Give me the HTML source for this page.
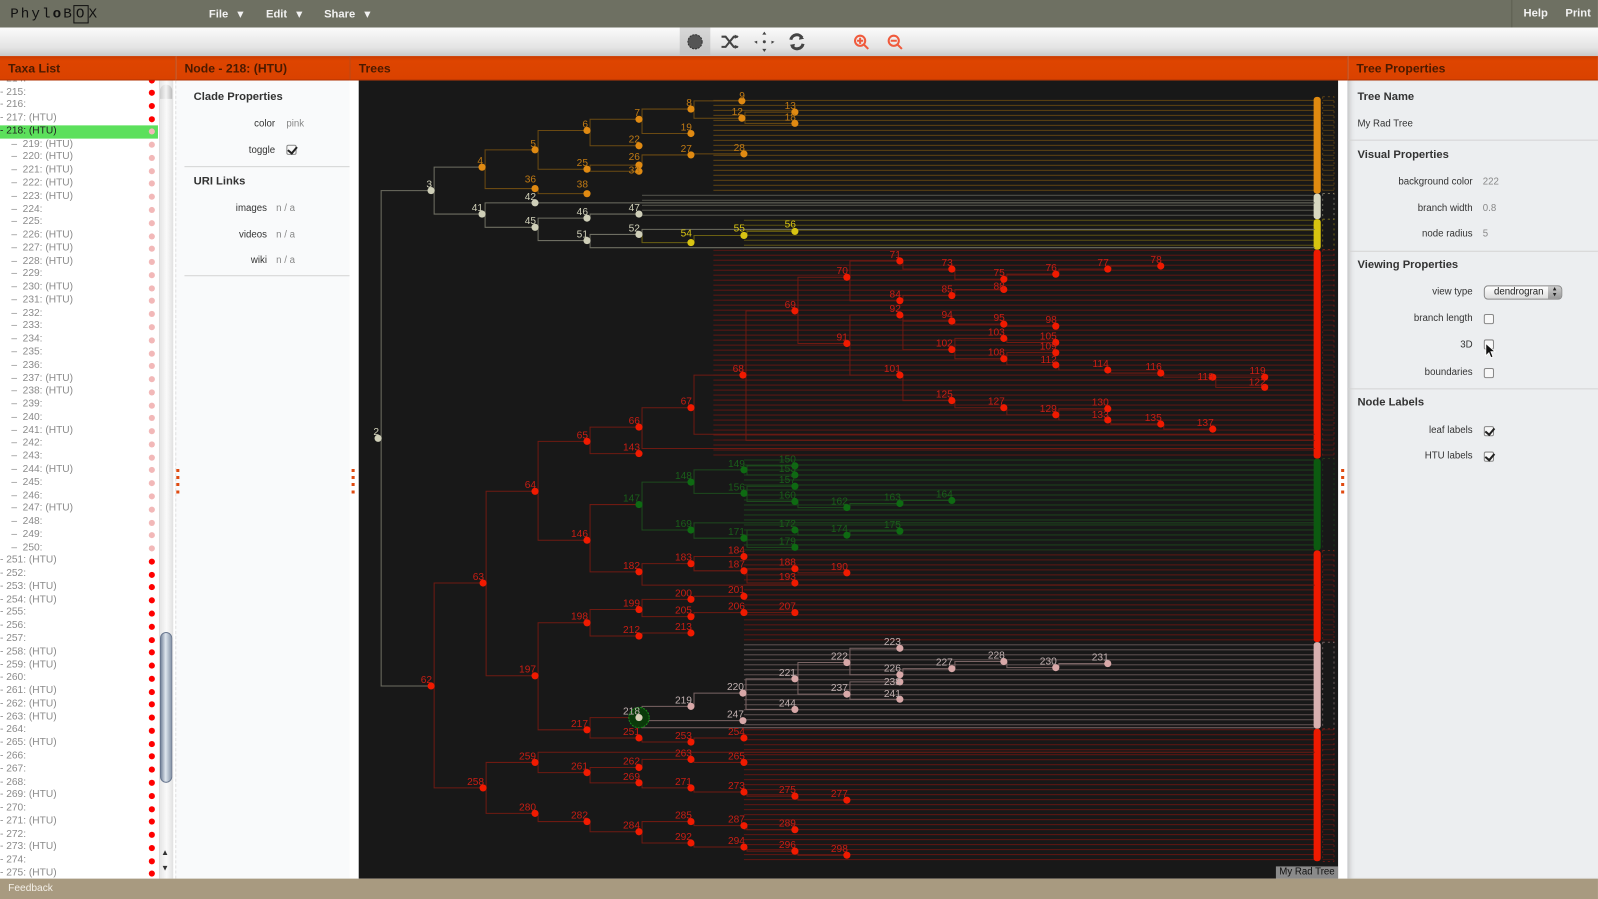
<!DOCTYPE html>
<html><head><meta charset="utf-8"><style>
*{margin:0;padding:0;box-sizing:border-box}
html,body{width:1598px;height:899px;overflow:hidden;background:#eceef0;font-family:"Liberation Sans",sans-serif}
#w{position:absolute;left:0;top:0;width:1568px;height:882px;transform:scale(1.0191,1.0193);transform-origin:0 0;background:#eceef0}
.a{position:absolute}
#top{left:0;top:0;width:1568px;height:27px;background:#6e7062}
#tool{left:0;top:27px;width:1568px;height:28px;background:linear-gradient(#fbfbfb,#e4e4e4 70%,#c8c8c8)}
.menu{color:#f2f2f2;font-weight:bold;font-size:11px;top:7px}
.hdr{top:55px;height:24px;background:linear-gradient(#c83a00,#de4500 20%,#da4200);border-bottom:1px solid #b03000}
.hdr span{position:absolute;top:5px;left:8px;font-size:12px;font-weight:bold;color:#4a1a00}
#taxa{left:0;top:79px;width:172px;height:783px;background:#fff;overflow:hidden}
.row{position:absolute;left:0;height:12.77px;width:155px;font-size:10px;line-height:12.77px;color:#8a8a8a;white-space:nowrap}
.row i{position:absolute;left:146px;top:3.5px;width:6px;height:6px;border-radius:50%;background:#f00;font-style:normal}
.row.p i{background:#f2b8b8}
.row.sel{background:#5ce05c;color:#222}
#node{left:172px;top:79px;width:171px;height:783px;background:#f9fafb;border-left:1px dashed #e2e2e2}
.lb{position:absolute;font-size:9.5px;color:#333;text-align:right;width:120px}
.vl{position:absolute;font-size:9.5px;color:#888}
.bh{position:absolute;font-size:11px;font-weight:bold;color:#333}
.sep{position:absolute;height:1px;background:#d4d4d4}
.cb{position:absolute;width:10px;height:10px;border:1px solid #888;border-radius:2px;background:#f8f8f8}
.cb.c::after{content:"";position:absolute;left:2px;top:-1px;width:4px;height:7px;border:solid #222;border-width:0 2px 2px 0;transform:rotate(40deg)}
#trees{left:343px;top:79px;width:979px;height:783px;background:#fff}
#cv{left:352px;top:79px;width:961px;height:783px;background:#181818;overflow:hidden}
#rp{left:1322px;top:79px;width:246px;height:783px;background:#eceef0;box-shadow:inset 6px 0 6px -4px #bbb}
#bot{left:0;top:862px;width:1568px;height:20px;background:#a89a80}
.band{position:absolute}
</style></head><body><div id="w">
<div class="a" id="top">
 <div class="a" style="left:10px;top:6px;font-size:14px;letter-spacing:2px;color:#111;font-family:'Liberation Mono',monospace">Phyl<b>o</b>B<span style="border:1px solid #111;padding:0 1px">O</span>X</div>
 <div class="a menu" style="left:205px">File&nbsp;&nbsp;&nbsp;▾</div>
 <div class="a menu" style="left:261px">Edit&nbsp;&nbsp;&nbsp;▾</div>
 <div class="a menu" style="left:318px">Share&nbsp;&nbsp;&nbsp;▾</div>
 <div class="a" style="left:1483px;top:0;width:1px;height:27px;background:#5c5e52"></div>
 <div class="a menu" style="left:1495px">Help</div>
 <div class="a menu" style="left:1536px">Print</div>
</div>
<div class="a" id="tool">
 <div class="a" style="left:667px;top:0;width:30px;height:27px;background:linear-gradient(#d8d8d8,#c4c4c4)"></div>
 <svg class="a" style="left:660px;top:0" width="240" height="27" viewBox="0 0 240 27">
  <circle cx="22" cy="14" r="7" fill="#555" stroke="#333" stroke-dasharray="2 1"/>
  <g stroke="#444" stroke-width="2" fill="none"><path d="M48 9h4l8 10h4M48 19h4l8-10h4"/></g>
  <path d="M61 7l4 2-4 2zM61 17l4 2-4 2z" fill="#444"/>
  <g fill="#444"><path d="M88 7l2-3 2 3zM88 21l2 3 2-3zM83 13l-3 1 3 2zM97 13l3 1-3 2z"/><circle cx="90" cy="14" r="1.5"/></g>
  <g stroke="#444" stroke-width="3" fill="none"><path d="M116 12a6 6 0 0 1 11-2M128 16a6 6 0 0 1-11 2"/></g>
  <path d="M125 7l4 4-5 1zM119 21l-4-4 5-1z" fill="#444"/>
  <g stroke="#f05a3c" stroke-width="2" fill="none"><circle cx="184" cy="13" r="5"/><path d="M188 17l4 4M181 13h6M184 10v6"/><circle cx="217" cy="13" r="5"/><path d="M221 17l4 4M214 13h6"/></g>
 </svg>
</div>
<div class="a hdr" style="left:0;width:172px"><span>Taxa List</span></div>
<div class="a hdr" style="left:172px;width:171px;border-left:1px solid #b83800"><span>Node - 218: (HTU)</span></div>
<div class="a hdr" style="left:343px;width:979px;border-left:1px solid #b83800"><span>Trees</span></div>
<div class="a hdr" style="left:1322px;width:246px;border-left:1px solid #b83800"><span>Tree Properties</span></div>

<div class="a" id="taxa">
<div class="row" style="top:-7px">- 214:<i></i></div>
<div class="row" style="top:5.5px">- 215:<i></i></div>
<div class="row" style="top:18.3px">- 216:<i></i></div>
<div class="row" style="top:31.1px">- 217: (HTU)<i></i></div>
<div class="row sel p" style="top:43.9px">- 218: (HTU)<i></i></div>
<div class="row p" style="top:56.6px">&nbsp;&nbsp;&nbsp;&nbsp;–&nbsp; 219: (HTU)<i></i></div>
<div class="row p" style="top:69.4px">&nbsp;&nbsp;&nbsp;&nbsp;–&nbsp; 220: (HTU)<i></i></div>
<div class="row p" style="top:82.2px">&nbsp;&nbsp;&nbsp;&nbsp;–&nbsp; 221: (HTU)<i></i></div>
<div class="row p" style="top:94.9px">&nbsp;&nbsp;&nbsp;&nbsp;–&nbsp; 222: (HTU)<i></i></div>
<div class="row p" style="top:107.7px">&nbsp;&nbsp;&nbsp;&nbsp;–&nbsp; 223: (HTU)<i></i></div>
<div class="row p" style="top:120.5px">&nbsp;&nbsp;&nbsp;&nbsp;–&nbsp; 224:<i></i></div>
<div class="row p" style="top:133.3px">&nbsp;&nbsp;&nbsp;&nbsp;–&nbsp; 225:<i></i></div>
<div class="row p" style="top:146px">&nbsp;&nbsp;&nbsp;&nbsp;–&nbsp; 226: (HTU)<i></i></div>
<div class="row p" style="top:158.8px">&nbsp;&nbsp;&nbsp;&nbsp;–&nbsp; 227: (HTU)<i></i></div>
<div class="row p" style="top:171.6px">&nbsp;&nbsp;&nbsp;&nbsp;–&nbsp; 228: (HTU)<i></i></div>
<div class="row p" style="top:184.4px">&nbsp;&nbsp;&nbsp;&nbsp;–&nbsp; 229:<i></i></div>
<div class="row p" style="top:197.1px">&nbsp;&nbsp;&nbsp;&nbsp;–&nbsp; 230: (HTU)<i></i></div>
<div class="row p" style="top:209.9px">&nbsp;&nbsp;&nbsp;&nbsp;–&nbsp; 231: (HTU)<i></i></div>
<div class="row p" style="top:222.7px">&nbsp;&nbsp;&nbsp;&nbsp;–&nbsp; 232:<i></i></div>
<div class="row p" style="top:235.4px">&nbsp;&nbsp;&nbsp;&nbsp;–&nbsp; 233:<i></i></div>
<div class="row p" style="top:248.2px">&nbsp;&nbsp;&nbsp;&nbsp;–&nbsp; 234:<i></i></div>
<div class="row p" style="top:261px">&nbsp;&nbsp;&nbsp;&nbsp;–&nbsp; 235:<i></i></div>
<div class="row p" style="top:273.8px">&nbsp;&nbsp;&nbsp;&nbsp;–&nbsp; 236:<i></i></div>
<div class="row p" style="top:286.5px">&nbsp;&nbsp;&nbsp;&nbsp;–&nbsp; 237: (HTU)<i></i></div>
<div class="row p" style="top:299.3px">&nbsp;&nbsp;&nbsp;&nbsp;–&nbsp; 238: (HTU)<i></i></div>
<div class="row p" style="top:312.1px">&nbsp;&nbsp;&nbsp;&nbsp;–&nbsp; 239:<i></i></div>
<div class="row p" style="top:324.9px">&nbsp;&nbsp;&nbsp;&nbsp;–&nbsp; 240:<i></i></div>
<div class="row p" style="top:337.6px">&nbsp;&nbsp;&nbsp;&nbsp;–&nbsp; 241: (HTU)<i></i></div>
<div class="row p" style="top:350.4px">&nbsp;&nbsp;&nbsp;&nbsp;–&nbsp; 242:<i></i></div>
<div class="row p" style="top:363.2px">&nbsp;&nbsp;&nbsp;&nbsp;–&nbsp; 243:<i></i></div>
<div class="row p" style="top:375.9px">&nbsp;&nbsp;&nbsp;&nbsp;–&nbsp; 244: (HTU)<i></i></div>
<div class="row p" style="top:388.7px">&nbsp;&nbsp;&nbsp;&nbsp;–&nbsp; 245:<i></i></div>
<div class="row p" style="top:401.5px">&nbsp;&nbsp;&nbsp;&nbsp;–&nbsp; 246:<i></i></div>
<div class="row p" style="top:414.3px">&nbsp;&nbsp;&nbsp;&nbsp;–&nbsp; 247: (HTU)<i></i></div>
<div class="row p" style="top:427px">&nbsp;&nbsp;&nbsp;&nbsp;–&nbsp; 248:<i></i></div>
<div class="row p" style="top:439.8px">&nbsp;&nbsp;&nbsp;&nbsp;–&nbsp; 249:<i></i></div>
<div class="row p" style="top:452.6px">&nbsp;&nbsp;&nbsp;&nbsp;–&nbsp; 250:<i></i></div>
<div class="row" style="top:465.4px">- 251: (HTU)<i></i></div>
<div class="row" style="top:478.1px">- 252:<i></i></div>
<div class="row" style="top:490.9px">- 253: (HTU)<i></i></div>
<div class="row" style="top:503.7px">- 254: (HTU)<i></i></div>
<div class="row" style="top:516.4px">- 255:<i></i></div>
<div class="row" style="top:529.2px">- 256:<i></i></div>
<div class="row" style="top:542px">- 257:<i></i></div>
<div class="row" style="top:554.8px">- 258: (HTU)<i></i></div>
<div class="row" style="top:567.5px">- 259: (HTU)<i></i></div>
<div class="row" style="top:580.3px">- 260:<i></i></div>
<div class="row" style="top:593.1px">- 261: (HTU)<i></i></div>
<div class="row" style="top:605.9px">- 262: (HTU)<i></i></div>
<div class="row" style="top:618.6px">- 263: (HTU)<i></i></div>
<div class="row" style="top:631.4px">- 264:<i></i></div>
<div class="row" style="top:644.2px">- 265: (HTU)<i></i></div>
<div class="row" style="top:656.9px">- 266:<i></i></div>
<div class="row" style="top:669.7px">- 267:<i></i></div>
<div class="row" style="top:682.5px">- 268:<i></i></div>
<div class="row" style="top:695.3px">- 269: (HTU)<i></i></div>
<div class="row" style="top:708px">- 270:<i></i></div>
<div class="row" style="top:720.8px">- 271: (HTU)<i></i></div>
<div class="row" style="top:733.6px">- 272:<i></i></div>
<div class="row" style="top:746.4px">- 273: (HTU)<i></i></div>
<div class="row" style="top:759.1px">- 274:<i></i></div>
<div class="row" style="top:771.9px">- 275: (HTU)<i></i></div>
<div class="a" style="left:156px;top:0;width:14px;height:783px;background:linear-gradient(90deg,#e6e6e6,#fafafa,#e0e0e0);border-left:1px solid #ddd"></div>
<div class="a" style="left:157px;top:4px;width:12px;height:14px;border-radius:6px 6px 0 0;background:linear-gradient(90deg,#ccc,#f4f4f4,#bbb)"></div>
<div class="a" style="left:157px;top:541px;width:12px;height:148px;border-radius:6px;background:linear-gradient(90deg,#7c8aa0,#dfe6ee 45%,#8a98ac);border:1px solid #6a7890"></div>
<div class="a" style="left:158px;top:753px;font-size:8px;color:#333">▲</div>
<div class="a" style="left:158px;top:768px;font-size:8px;color:#333">▼</div>
</div>

<div class="a" id="node">
 <div class="bh" style="left:17px;top:10px">Clade Properties</div>
 <div class="lb" style="left:-23px;top:37px">color</div><div class="vl" style="left:108px;top:37px">pink</div>
 <div class="lb" style="left:-23px;top:63px">toggle</div><div class="cb c" style="left:108px;top:63px"></div>
 <div class="sep" style="left:8px;width:163px;top:84px"></div>
 <div class="bh" style="left:17px;top:93px">URI Links</div>
 <div class="lb" style="left:-31px;top:120px">images</div><div class="vl" style="left:98px;top:120px">n / a</div>
 <div class="lb" style="left:-31px;top:146px">videos</div><div class="vl" style="left:98px;top:146px">n / a</div>
 <div class="lb" style="left:-31px;top:171px">wiki</div><div class="vl" style="left:98px;top:171px">n / a</div>
 <div class="sep" style="left:8px;width:163px;top:191px"></div>
</div>

<div class="a" id="trees"></div>
<div class="a" style="left:173px;top:460px;width:3px;height:25px;background:repeating-linear-gradient(#e04a10 0 3px,transparent 3px 7px)"></div>
<div class="a" style="left:345px;top:460px;width:3px;height:25px;background:repeating-linear-gradient(#e04a10 0 3px,transparent 3px 7px)"></div>
<div class="a" style="left:1316px;top:460px;width:3px;height:25px;background:repeating-linear-gradient(#e04a10 0 3px,transparent 3px 7px)"></div>

<div class="a" id="cv">
<svg width="961" height="783" viewBox="352 79 961 783" style="position:absolute;left:0;top:0">
<defs>
<pattern id="po" width="10" height="4.9" patternUnits="userSpaceOnUse"><rect width="10" height="1" fill="#5e4212"/></pattern>
<pattern id="pg" width="10" height="4.9" patternUnits="userSpaceOnUse"><rect width="10" height="1" fill="#54544c"/></pattern>
<pattern id="py" width="10" height="4.9" patternUnits="userSpaceOnUse"><rect width="10" height="1" fill="#5a5012"/></pattern>
<pattern id="pr" width="10" height="4.9" patternUnits="userSpaceOnUse"><rect width="10" height="1" fill="#5e1612"/></pattern>
<pattern id="pn" width="10" height="4.9" patternUnits="userSpaceOnUse"><rect width="10" height="1" fill="#1a421a"/></pattern>
<pattern id="pp" width="10" height="4.9" patternUnits="userSpaceOnUse"><rect width="10" height="1" fill="#5e5050"/></pattern>
</defs>
<rect x="700" y="95" width="592" height="95" fill="url(#po)"/>
<rect x="630" y="190" width="662" height="25" fill="url(#pg)"/>
<rect x="730" y="215" width="562" height="30" fill="url(#py)"/>
<rect x="700" y="245" width="592" height="205" fill="url(#pr)"/>
<rect x="730" y="450" width="562" height="90" fill="url(#pn)"/>
<rect x="730" y="540" width="562" height="90" fill="url(#pr)"/>
<rect x="730" y="630" width="562" height="85" fill="url(#pp)"/>
<rect x="730" y="715" width="562" height="130" fill="url(#pr)"/>
<rect x="1289" y="95" width="7" height="95" rx="3" fill="#e08a10"/>
<rect x="1289" y="190" width="7" height="25" rx="3" fill="#d8d8c0"/>
<rect x="1289" y="215" width="7" height="30" rx="3" fill="#d8c410"/>
<rect x="1289" y="245" width="7" height="205" rx="3" fill="#ee1a00"/>
<rect x="1289" y="450" width="7" height="90" rx="3" fill="#0c5a10"/>
<rect x="1289" y="540" width="7" height="90" rx="3" fill="#ee1a00"/>
<rect x="1289" y="630" width="7" height="85" rx="3" fill="#d8b0b0"/>
<rect x="1289" y="715" width="7" height="130" rx="3" fill="#ee1a00"/>
<g opacity="0.75">
<rect x="1298" y="95" width="11" height="95" fill="url(#po)" stroke="#b07010" stroke-width="0.6" stroke-dasharray="2 3"/>
<rect x="1298" y="190" width="11" height="25" fill="none" stroke="#c8c8b0" stroke-width="0.6" stroke-dasharray="2 3"/>
<rect x="1298" y="215" width="11" height="30" fill="none" stroke="#c8b010" stroke-width="0.6" stroke-dasharray="2 3"/>
<rect x="1298" y="245" width="11" height="205" fill="url(#pr)" stroke="#c01a10" stroke-width="0.6" stroke-dasharray="2 3"/>
<rect x="1298" y="450" width="11" height="90" fill="none" stroke="#1a5a1a" stroke-width="0.6" stroke-dasharray="2 3"/>
<rect x="1298" y="540" width="11" height="90" fill="url(#pr)" stroke="#c01a10" stroke-width="0.6" stroke-dasharray="2 3"/>
<rect x="1298" y="630" width="11" height="85" fill="none" stroke="#c0a0a0" stroke-width="0.6" stroke-dasharray="2 3"/>
<rect x="1298" y="715" width="11" height="130" fill="url(#pr)" stroke="#c01a10" stroke-width="0.6" stroke-dasharray="2 3"/>
</g>
<g fill="none" stroke-width="1">
<path stroke="#6e6e62" d="M374 430V187H423M374 430V673H423M426 187V164H473M426 187V210H473M476 210V199H525M476 210V223H525M528 223V214H576M528 223V236H576M579 214V210H627M579 236V230H627M528 199H1290M579 236V243H1290M630 230V225H1290"/>
<path stroke="#6b4a12" d="M476 164V147H525M476 164V185H525M528 147V128H576M528 147V166H576M579 128V117H627M579 128V143H627M630 117V107H678M630 117V131H678M681 107V99H728M681 107V116H728M731 116V110H780M731 116V121H780M579 166V162H627M579 166V168H627M630 162V152H678M681 152V151H730M528 185V190H576"/>
<path stroke="#6b6012" d="M630 230V238H678M681 238V231H730M733 231V227H780"/>
<path stroke="#6e1a12" d="M426 673V572H474M426 673V773H474M477 572V482H525M477 572V663H525M528 482V433H576M528 482V530H576M579 433V419H627M579 433V445H627M630 419V400H678M681 400V368H729M732 368V305H780M783 305V272H831M783 305V337H831M834 272V256H883M834 272V295H883M886 256V264H934M937 264V274H985M988 274V269H1036M1039 269V264H1087M1090 264V261H1139M886 295V290H934M937 290V284H985M834 337V309H883M834 337V368H883M886 309V315H934M886 309V343H934M937 315V318H985M988 318V320H1036M937 343V332H985M937 343V352H985M988 332V336H1036M988 352V346H1036M988 352V358H1036M1039 358V363H1087M1090 363V366H1139M1142 366V370H1190M1193 370H1241M1193 370V380H1241M886 368V393H934M937 393V400H985M988 400V407H1036M1039 407V401H1087M1039 407V412H1087M1090 412V416H1139M1142 416V421H1190M732 368V432H1290M630 419V440H1290M681 400V426H1290M579 530V495H627M579 530V561H627M630 561V553H678M630 561V574H1290M681 553V546H730M681 553V560H730M733 560V558H780M733 560V572H780M783 558V562H831M528 663V611H576M528 663V716H576M579 611V598H627M579 611V624H627M630 598V588H678M630 598V605H678M681 588V585H730M681 605V601H730M733 601H780M630 624V621H678M579 716V704H627M579 716V724H627M630 724V728H678M681 728V724H730M477 773V748H525M477 773V798H525M528 748V758H576M528 748V738H1290M579 758V753H627M579 758V768H627M630 753V745H678M681 745V748H730M630 768V773H678M681 773V777H730M733 777V781H780M783 781V785H831M528 798V806H576M579 806V816H627M630 816V806H678M630 816V827H678M681 806V810H730M733 810V814H780M681 827V831H730M733 831V835H780M783 835V839H831"/>
<path stroke="#1d4a1d" d="M630 495V473H678M630 495V520H678M681 473V461H730M681 473V484H730M733 461V457H780M733 461V466H780M733 484V477H780M733 484V492H780M783 492V498H831M834 498V494H883M886 494V491H934M681 520V513H1290M681 520V528H730M733 528V520H780M733 528V537H780M783 520V525H831M834 525V521H883"/>
<path stroke="#7a6464" d="M630 704V693H678M630 704V707H729M681 693V680H729M732 680V666H780M732 680V696H780M783 666V650H831M783 666V681H831M834 650V636H883M834 650V662H883M886 662V656H934M937 656V649H985M988 649V655H1036M1039 655V651H1087M834 681V669H883M834 681V686H883M630 704V714H1290"/>
</g>
<circle cx="627" cy="704" r="10" fill="#0a3a0a" stroke="#1a8a1a" stroke-dasharray="2 1"/>
<g font-size="10" font-family="Liberation Sans,sans-serif" text-anchor="end">
<g fill="#cfcfb8"><circle cx="371" cy="430" r="3.5"/><circle cx="423" cy="187" r="3.5"/><circle cx="473" cy="210" r="3.5"/><circle cx="525" cy="199" r="3.5"/><circle cx="525" cy="223" r="3.5"/><circle cx="576" cy="214" r="3.5"/><circle cx="627" cy="210" r="3.5"/><circle cx="576" cy="236" r="3.5"/><circle cx="627" cy="230" r="3.5"/>
<text x="372" y="427">2</text><text x="424" y="184">3</text><text x="474" y="207">41</text><text x="526" y="196">42</text><text x="526" y="220">45</text><text x="577" y="211">46</text><text x="628" y="207">47</text><text x="577" y="233">51</text><text x="628" y="227">52</text></g>
<g fill="#e08a12"><circle cx="473" cy="164" r="3.5"/><circle cx="525" cy="147" r="3.5"/><circle cx="576" cy="128" r="3.5"/><circle cx="627" cy="117" r="3.5"/><circle cx="678" cy="107" r="3.5"/><circle cx="728" cy="99" r="3.5"/><circle cx="728" cy="116" r="3.5"/><circle cx="780" cy="110" r="3.5"/><circle cx="780" cy="121" r="3.5"/><circle cx="678" cy="131" r="3.5"/><circle cx="627" cy="143" r="3.5"/><circle cx="576" cy="166" r="3.5"/><circle cx="627" cy="162" r="3.5"/><circle cx="678" cy="152" r="3.5"/><circle cx="730" cy="151" r="3.5"/><circle cx="627" cy="168" r="3.5"/><circle cx="525" cy="185" r="3.5"/><circle cx="576" cy="190" r="3.5"/></g>
<g fill="#c07a14"><text x="474" y="161">4</text><text x="526" y="144">5</text><text x="577" y="125">6</text><text x="628" y="114">7</text><text x="679" y="104">8</text><text x="731" y="97">9</text><text x="729" y="113">12</text><text x="781" y="107">13</text><text x="781" y="118">18</text><text x="679" y="128">19</text><text x="628" y="140">22</text><text x="577" y="163">25</text><text x="628" y="157">26</text><text x="679" y="149">27</text><text x="731" y="148">28</text><text x="628" y="170">33</text><text x="526" y="179">36</text><text x="577" y="184">38</text></g>
<g fill="#d8c412"><circle cx="678" cy="238" r="3.5"/><circle cx="730" cy="231" r="3.5"/><circle cx="780" cy="227" r="3.5"/><text x="679" y="232">54</text><text x="731" y="227">55</text><text x="781" y="223">56</text></g>
<g fill="#f01a00"><circle cx="423" cy="673" r="3.5"/><circle cx="474" cy="572" r="3.5"/><circle cx="525" cy="482" r="3.5"/><circle cx="576" cy="433" r="3.5"/><circle cx="627" cy="419" r="3.5"/><circle cx="678" cy="400" r="3.5"/><circle cx="729" cy="368" r="3.5"/><circle cx="780" cy="305" r="3.5"/><circle cx="831" cy="272" r="3.5"/><circle cx="883" cy="256" r="3.5"/><circle cx="934" cy="264" r="3.5"/><circle cx="985" cy="274" r="3.5"/><circle cx="1036" cy="269" r="3.5"/><circle cx="1087" cy="264" r="3.5"/><circle cx="1139" cy="261" r="3.5"/><circle cx="883" cy="295" r="3.5"/><circle cx="934" cy="290" r="3.5"/><circle cx="985" cy="284" r="3.5"/><circle cx="831" cy="337" r="3.5"/><circle cx="883" cy="309" r="3.5"/><circle cx="934" cy="315" r="3.5"/><circle cx="985" cy="318" r="3.5"/><circle cx="1036" cy="320" r="3.5"/><circle cx="934" cy="343" r="3.5"/><circle cx="985" cy="332" r="3.5"/><circle cx="1036" cy="336" r="3.5"/><circle cx="985" cy="352" r="3.5"/><circle cx="1036" cy="346" r="3.5"/><circle cx="1036" cy="358" r="3.5"/><circle cx="1087" cy="363" r="3.5"/><circle cx="1139" cy="366" r="3.5"/><circle cx="1190" cy="370" r="3.5"/><circle cx="1241" cy="370" r="3.5"/><circle cx="1241" cy="380" r="3.5"/><circle cx="883" cy="368" r="3.5"/><circle cx="934" cy="393" r="3.5"/><circle cx="985" cy="400" r="3.5"/><circle cx="1036" cy="407" r="3.5"/><circle cx="1087" cy="401" r="3.5"/><circle cx="1087" cy="412" r="3.5"/><circle cx="1139" cy="416" r="3.5"/><circle cx="1190" cy="421" r="3.5"/><circle cx="627" cy="445" r="3.5"/><circle cx="576" cy="530" r="3.5"/><circle cx="627" cy="561" r="3.5"/><circle cx="678" cy="553" r="3.5"/><circle cx="730" cy="546" r="3.5"/><circle cx="730" cy="560" r="3.5"/><circle cx="780" cy="558" r="3.5"/><circle cx="831" cy="562" r="3.5"/><circle cx="780" cy="572" r="3.5"/><circle cx="525" cy="663" r="3.5"/><circle cx="576" cy="611" r="3.5"/><circle cx="627" cy="598" r="3.5"/><circle cx="678" cy="588" r="3.5"/><circle cx="730" cy="585" r="3.5"/><circle cx="678" cy="605" r="3.5"/><circle cx="730" cy="601" r="3.5"/><circle cx="780" cy="601" r="3.5"/><circle cx="627" cy="624" r="3.5"/><circle cx="678" cy="621" r="3.5"/><circle cx="576" cy="716" r="3.5"/><circle cx="627" cy="724" r="3.5"/><circle cx="678" cy="728" r="3.5"/><circle cx="730" cy="724" r="3.5"/><circle cx="474" cy="773" r="3.5"/><circle cx="525" cy="748" r="3.5"/><circle cx="576" cy="758" r="3.5"/><circle cx="627" cy="753" r="3.5"/><circle cx="678" cy="745" r="3.5"/><circle cx="730" cy="748" r="3.5"/><circle cx="627" cy="768" r="3.5"/><circle cx="678" cy="773" r="3.5"/><circle cx="730" cy="777" r="3.5"/><circle cx="780" cy="781" r="3.5"/><circle cx="831" cy="785" r="3.5"/><circle cx="525" cy="798" r="3.5"/><circle cx="576" cy="806" r="3.5"/><circle cx="627" cy="816" r="3.5"/><circle cx="678" cy="806" r="3.5"/><circle cx="730" cy="810" r="3.5"/><circle cx="780" cy="814" r="3.5"/><circle cx="678" cy="827" r="3.5"/><circle cx="730" cy="831" r="3.5"/><circle cx="780" cy="835" r="3.5"/><circle cx="831" cy="839" r="3.5"/></g>
<g fill="#c81e14"><text x="424" y="670">62</text><text x="475" y="569">63</text><text x="526" y="479">64</text><text x="577" y="430">65</text><text x="628" y="416">66</text><text x="679" y="397">67</text><text x="730" y="365">68</text><text x="781" y="302">69</text><text x="832" y="269">70</text><text x="884" y="253">71</text><text x="935" y="261">73</text><text x="986" y="271">75</text><text x="1037" y="266">76</text><text x="1088" y="261">77</text><text x="1140" y="258">78</text><text x="884" y="292">84</text><text x="935" y="287">85</text><text x="986" y="284">88</text><text x="832" y="334">91</text><text x="884" y="306">92</text><text x="935" y="312">94</text><text x="986" y="315">95</text><text x="1037" y="317">98</text><text x="935" y="340">102</text><text x="986" y="329">103</text><text x="1037" y="333">105</text><text x="986" y="349">108</text><text x="1037" y="343">109</text><text x="1037" y="356">112</text><text x="1088" y="360">114</text><text x="1140" y="363">116</text><text x="1191" y="373">118</text><text x="1242" y="367">119</text><text x="1242" y="378">122</text><text x="884" y="365">101</text><text x="935" y="390">125</text><text x="986" y="397">127</text><text x="1037" y="404">129</text><text x="1088" y="398">130</text><text x="1088" y="410">133</text><text x="1140" y="413">135</text><text x="1191" y="418">137</text><text x="628" y="442">143</text><text x="577" y="527">146</text><text x="628" y="558">182</text><text x="679" y="550">183</text><text x="731" y="543">184</text><text x="731" y="557">187</text><text x="781" y="555">188</text><text x="832" y="559">190</text><text x="781" y="569">193</text><text x="526" y="660">197</text><text x="577" y="608">198</text><text x="628" y="595">199</text><text x="679" y="585">200</text><text x="731" y="582">201</text><text x="679" y="602">205</text><text x="731" y="598">206</text><text x="781" y="598">207</text><text x="628" y="621">212</text><text x="679" y="618">213</text><text x="577" y="713">217</text><text x="628" y="721">251</text><text x="679" y="725">253</text><text x="731" y="721">254</text><text x="475" y="770">258</text><text x="526" y="745">259</text><text x="577" y="755">261</text><text x="628" y="750">262</text><text x="679" y="742">263</text><text x="731" y="745">265</text><text x="628" y="765">269</text><text x="679" y="770">271</text><text x="731" y="774">273</text><text x="781" y="778">275</text><text x="832" y="782">277</text><text x="526" y="795">280</text><text x="577" y="803">282</text><text x="628" y="813">284</text><text x="679" y="803">285</text><text x="731" y="807">287</text><text x="781" y="811">289</text><text x="679" y="824">292</text><text x="731" y="828">294</text><text x="781" y="832">296</text><text x="832" y="836">298</text></g>
<g fill="#0e6a12"><circle cx="627" cy="495" r="3.5"/><circle cx="678" cy="473" r="3.5"/><circle cx="730" cy="461" r="3.5"/><circle cx="780" cy="457" r="3.5"/><circle cx="780" cy="466" r="3.5"/><circle cx="780" cy="477" r="3.5"/><circle cx="730" cy="484" r="3.5"/><circle cx="780" cy="492" r="3.5"/><circle cx="831" cy="498" r="3.5"/><circle cx="883" cy="494" r="3.5"/><circle cx="934" cy="491" r="3.5"/><circle cx="678" cy="520" r="3.5"/><circle cx="730" cy="528" r="3.5"/><circle cx="780" cy="520" r="3.5"/><circle cx="831" cy="525" r="3.5"/><circle cx="883" cy="521" r="3.5"/><circle cx="780" cy="537" r="3.5"/></g>
<g fill="#1a5e1a"><text x="628" y="492">147</text><text x="679" y="470">148</text><text x="731" y="458">149</text><text x="781" y="454">150</text><text x="781" y="463">153</text><text x="781" y="474">157</text><text x="731" y="481">156</text><text x="781" y="489">160</text><text x="832" y="495">162</text><text x="884" y="491">163</text><text x="935" y="488">164</text><text x="679" y="517">169</text><text x="731" y="525">171</text><text x="781" y="517">172</text><text x="832" y="522">174</text><text x="884" y="518">175</text><text x="781" y="534">179</text></g>
<g fill="#d8a8a8"><circle cx="627" cy="704" r="3.5" fill="#d8d0b8"/><circle cx="678" cy="693" r="3.5"/><circle cx="729" cy="680" r="3.5"/><circle cx="780" cy="666" r="3.5"/><circle cx="831" cy="650" r="3.5"/><circle cx="883" cy="636" r="3.5"/><circle cx="883" cy="662" r="3.5"/><circle cx="934" cy="656" r="3.5"/><circle cx="985" cy="649" r="3.5"/><circle cx="1036" cy="655" r="3.5"/><circle cx="1087" cy="651" r="3.5"/><circle cx="831" cy="681" r="3.5"/><circle cx="883" cy="669" r="3.5"/><circle cx="883" cy="686" r="3.5"/><circle cx="780" cy="696" r="3.5"/><circle cx="729" cy="707" r="3.5"/></g>
<g fill="#c0b0b0"><text x="628" y="701">218</text><text x="679" y="690">219</text><text x="730" y="677">220</text><text x="781" y="663">221</text><text x="832" y="647">222</text><text x="884" y="633">223</text><text x="884" y="659">226</text><text x="935" y="653">227</text><text x="986" y="646">228</text><text x="1037" y="652">230</text><text x="1088" y="648">231</text><text x="832" y="678">237</text><text x="884" y="672">238</text><text x="884" y="684">241</text><text x="781" y="693">244</text><text x="730" y="704">247</text></g>
</g>
</svg>
<div class="a" style="left:900px;top:771px;width:61px;height:12px;background:#8a8a8a;font-size:9.5px;color:#111;text-align:center;line-height:12px">My Rad Tree</div>
</div>

<div class="a" id="rp">
 <div class="bh" style="left:10px;top:10px">Tree Name</div>
 <div class="vl" style="left:10px;top:37px;color:#333">My Rad Tree</div>
 <div class="sep" style="left:0;width:246px;top:58px"></div>
 <div class="bh" style="left:10px;top:67px">Visual Properties</div>
 <div class="lb" style="left:3px;top:94px">background color</div><div class="vl" style="left:133px;top:94px">222</div>
 <div class="lb" style="left:3px;top:120px">branch width</div><div class="vl" style="left:133px;top:120px">0.8</div>
 <div class="lb" style="left:3px;top:145px">node radius</div><div class="vl" style="left:133px;top:145px">5</div>
 <div class="sep" style="left:0;width:246px;top:167px"></div>
 <div class="bh" style="left:10px;top:175px">Viewing Properties</div>
 <div class="lb" style="left:3px;top:202px">view type</div>
 <div class="a" style="left:134px;top:201px;width:77px;height:14px;border:1px solid #888;border-radius:4px;background:linear-gradient(#fff,#ddd);font-size:9.5px;line-height:12px;padding-left:9px;color:#222">dendrogran<span style="position:absolute;right:0;top:0;width:13px;height:12px;background:linear-gradient(#ccc,#999);border-radius:0 3px 3px 0;font-size:7px;text-align:center;line-height:6px">▴<br>▾</span></div>
 <div class="lb" style="left:3px;top:228px">branch length</div><div class="cb" style="left:134px;top:229px"></div>
 <div class="lb" style="left:3px;top:254px">3D</div><div class="cb" style="left:134px;top:254px"></div>
 <svg class="a" style="left:135px;top:257px" width="12" height="16"><path d="M1 1v12l3-3 2 5 2-1-2-5h4z" fill="#111" stroke="#fff" stroke-width="0.8"/></svg>
 <div class="lb" style="left:3px;top:281px">boundaries</div><div class="cb" style="left:134px;top:282px"></div>
 <div class="sep" style="left:0;width:246px;top:302px"></div>
 <div class="bh" style="left:10px;top:310px">Node Labels</div>
 <div class="lb" style="left:3px;top:338px">leaf labels</div><div class="cb c" style="left:134px;top:339px"></div>
 <div class="lb" style="left:3px;top:363px">HTU labels</div><div class="cb c" style="left:134px;top:364px"></div>
</div>

<div class="a" id="bot"><div class="a" style="left:8px;top:4px;font-size:10px;color:#f4f0e8">Feedback</div></div>
</div></body></html>
